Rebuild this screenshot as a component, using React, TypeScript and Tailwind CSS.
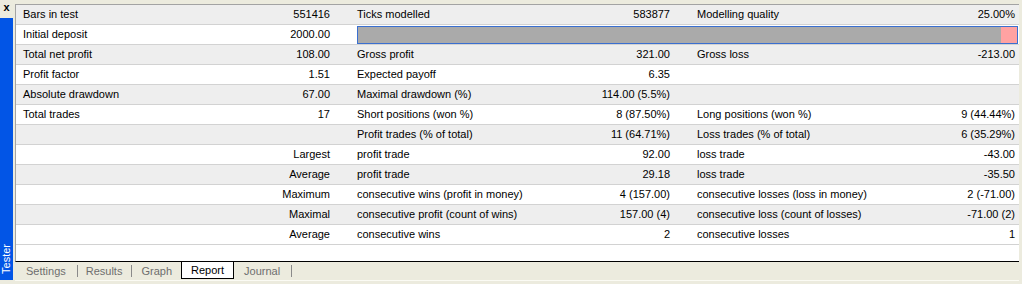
import React from 'react';

type Row = [string, string, string, string, string, string];

const rows: (Row | 'bar')[] = [
  ['Bars in test', '551416', 'Ticks modelled', '583877', 'Modelling quality', '25.00%'],
  'bar',
  ['Total net profit', '108.00', 'Gross profit', '321.00', 'Gross loss', '-213.00'],
  ['Profit factor', '1.51', 'Expected payoff', '6.35', '', ''],
  ['Absolute drawdown', '67.00', 'Maximal drawdown (%)', '114.00 (5.5%)', '', ''],
  ['Total trades', '17', 'Short positions (won %)', '8 (87.50%)', 'Long positions (won %)', '9 (44.44%)'],
  ['', '', 'Profit trades (% of total)', '11 (64.71%)', 'Loss trades (% of total)', '6 (35.29%)'],
  ['', 'Largest', 'profit trade', '92.00', 'loss trade', '-43.00'],
  ['', 'Average', 'profit trade', '29.18', 'loss trade', '-35.50'],
  ['', 'Maximum', 'consecutive wins (profit in money)', '4 (157.00)', 'consecutive losses (loss in money)', '2 (-71.00)'],
  ['', 'Maximal', 'consecutive profit (count of wins)', '157.00 (4)', 'consecutive loss (count of losses)', '-71.00 (2)'],
  ['', 'Average', 'consecutive wins', '2', 'consecutive losses', '1'],
];

const Sep = ({ ml }: { ml: string }) => <span className={`${ml} mt-[3px] w-px h-[12px] bg-[#8a8a8a]`} />;

const App = () => {
  return (
    <div
      className="w-[1022px] h-[284px] bg-[#ecebde] flex text-[11px] text-black overflow-hidden"
      style={{ fontFamily: '"Liberation Sans", Arial, sans-serif' }}
    >
      {/* side strip */}
      <div className="w-[13px] flex flex-col">
        <div className="h-[18px] flex justify-center pt-[1px] text-[11px] font-bold leading-[13px]">x</div>
        <div className="flex-1 bg-[#0255e6] flex flex-col justify-end items-center pb-[6px]">
          <span className="text-white text-[11px] leading-[13px] [writing-mode:vertical-rl] rotate-180">Tester</span>
        </div>
        <div className="h-[4px]" />
      </div>

      <div className="ml-[2px] mr-[3px] flex-1 flex flex-col pt-[4px]">
        <div className="flex-1 bg-white border-t border-l border-[#a3a3a3] border-b border-b-black">
          {rows.map((r, i) => {
            const bg = i % 2 === 0 ? 'bg-[#eeeeee]' : 'bg-white';
            if (r === 'bar') {
              return (
                <div key={i} className={`h-[20px] border-b border-[#d2d2d2] grid grid-cols-[324px_1fr] ${bg}`}>
                  <div className="flex justify-between items-center pl-[7px] pr-[10px] leading-[19px]">
                    <span>Initial deposit</span>
                    <span>2000.00</span>
                  </div>
                  <div className="ml-[17px] mr-px mt-px h-[18px] border border-[#3a6fd0] bg-[#aaaaaa] flex justify-end">
                    <div className="w-[16px] bg-[#ffa2a2]" />
                  </div>
                </div>
              );
            }
            return (
              <div key={i} className={`h-[20px] border-b border-[#d2d2d2] grid grid-cols-[324px_340px_1fr] leading-[19px] ${bg}`}>
                <div className="flex justify-between pl-[7px] pr-[10px]">
                  <span>{r[0]}</span>
                  <span>{r[1]}</span>
                </div>
                <div className="flex justify-between pl-[17px] pr-[10px]">
                  <span>{r[2]}</span>
                  <span>{r[3]}</span>
                </div>
                <div className="flex justify-between pl-[17px] pr-[4px]">
                  <span>{r[4]}</span>
                  <span>{r[5]}</span>
                </div>
              </div>
            );
          })}
        </div>

        {/* tabs */}
        <div className="h-[18px] flex items-start pl-[11px] text-[#6e6e6e] leading-[16px]">
          <span className="mt-px">Settings</span>
          <Sep ml="ml-[11px]" />
          <span className="ml-[8px] mt-px">Results</span>
          <Sep ml="ml-[9px]" />
          <span className="ml-[9px] mt-px">Graph</span>
          <div className="ml-[9px] h-[17px] w-[53px] bg-white border-l border-r border-b border-black text-black flex justify-center">
            <span>Report</span>
          </div>
          <span className="ml-[10px] mt-px">Journal</span>
          <Sep ml="ml-[11px]" />
        </div>
        <div className="h-px bg-[#fbfbf4]" />
        <div className="h-[3px]" />
      </div>
    </div>
  );
};

export default App;
